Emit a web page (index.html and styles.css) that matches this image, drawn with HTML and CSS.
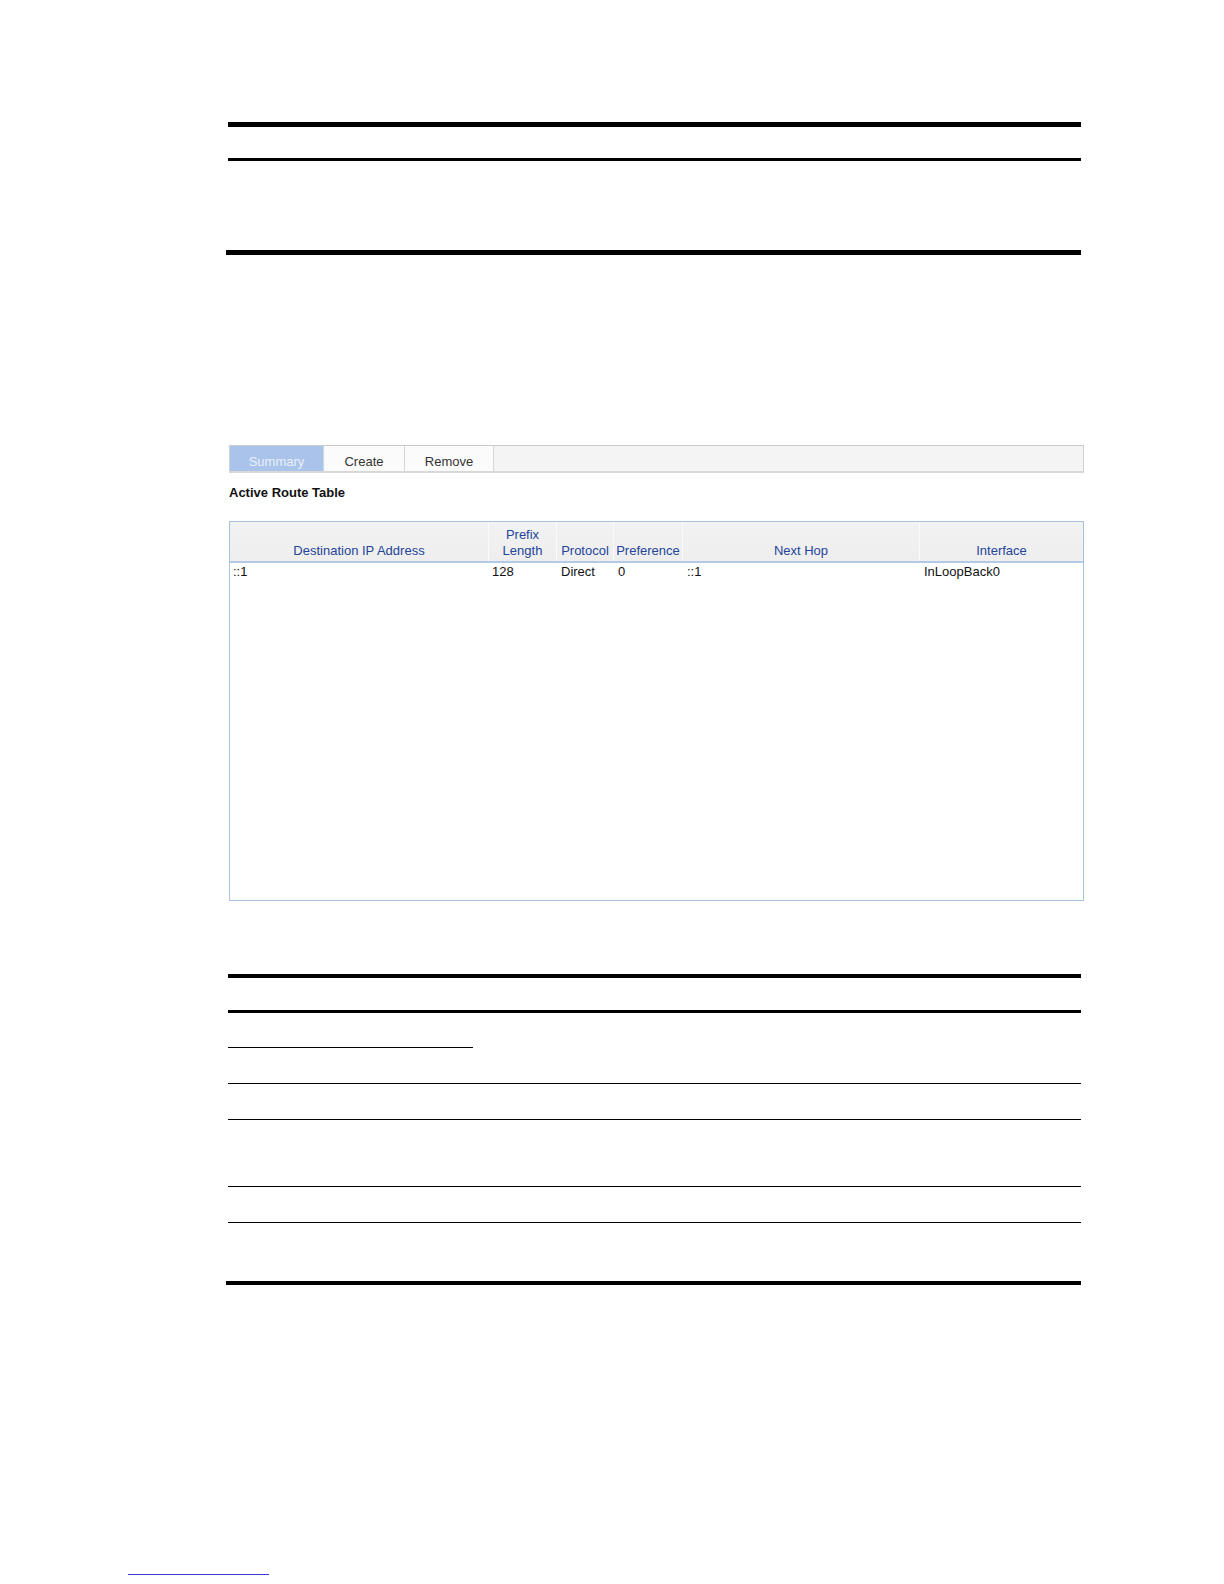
FILE: index.html
```html
<!DOCTYPE html>
<html lang="en">
<head>
<meta charset="utf-8">
<title>Active Route Table</title>
<link rel="stylesheet" href="styles.css">
</head>
<body>
<div class="page">
  <div class="rule-table top-table">
    <div class="rt-head"></div>
    <div class="rt-body-top"></div>
    <div class="rt-end"></div>
  </div>

  <div class="shot">
    <div class="tabs">
      <div class="tab active">Summary</div>
      <div class="tab">Create</div>
      <div class="tab">Remove</div>
      <div class="tab-fill"></div>
    </div>
    <h2 class="title">Active Route Table</h2>
    <div class="grid">
      <div class="grid-head">
        <div class="hc c1">Destination IP Address</div>
        <div class="hc c2">Prefix<br>Length</div>
        <div class="hc c3">Protocol</div>
        <div class="hc c4">Preference</div>
        <div class="hc c5">Next Hop</div>
        <div class="hc c6">Interface</div>
      </div>
      <div class="grid-row">
        <div class="dc c1">::1</div>
        <div class="dc c2">128</div>
        <div class="dc c3">Direct</div>
        <div class="dc c4">0</div>
        <div class="dc c5">::1</div>
        <div class="dc c6">InLoopBack0</div>
      </div>
    </div>
  </div>

  <div class="rule-table bottom-table">
    <div class="rt-head thin"></div>
    <div class="rt-row r1"><div class="sub"></div></div>
    <div class="rt-row r2"></div>
    <div class="rt-row r3"></div>
    <div class="rt-row r4"></div>
    <div class="rt-row r5 last"></div>
    <div class="rt-end thin"></div>
  </div>

  <div class="foot-link"></div>
</div>
</body>
</html>
```
FILE: styles.css
```css
html, body {
  margin: 0;
  padding: 0;
  background: #ffffff;
}
body {
  font-family: "Liberation Sans", Arial, sans-serif;
  font-size: 13px;
  color: #000;
}
.page {
  width: 1224px;
  min-height: 1584px;
}

/* document rule tables */
.rule-table {
  margin-left: 228px;
  width: 853px;
}
.top-table {
  padding-top: 122px;
}
.rt-head {
  border-top: 5px solid #000;
  border-bottom: 3px solid #000;
  height: 31px;
}
.rt-head.thin {
  border-top-width: 4px;
  height: 32px;
}
.rt-body-top {
  height: 89px;
}
.rt-end {
  margin-left: -2px;
  width: 855px;
  height: 5px;
  background: #000;
}
.rt-end.thin {
  height: 4px;
}

.bottom-table {
  margin-top: 73px;
}
.rt-row {
  border-bottom: 1px solid #000;
}
.rt-row.last {
  border-bottom: none;
}
.r1 { height: 70px; }
.r1 .sub {
  width: 245px;
  height: 34px;
  border-bottom: 1px solid #000;
}
.r2 { height: 35px; }
.r3 { height: 66px; }
.r4 { height: 35px; }
.r5 { height: 58px; }

/* UI screenshot */
.shot {
  margin-top: 190px;
  margin-left: 229px;
  width: 855px;
}
.tabs {
  display: flex;
  height: 25px;
  border-top: 1px solid #cacaca;
  border-left: 1px solid #d2d2d2;
  border-right: 1px solid #d2d2d2;
  border-bottom: 2px solid #d8d8d8;
  background: #f4f4f4;
}
.tab {
  display: flex;
  align-items: center;
  justify-content: center;
  padding-top: 6px;
  box-sizing: border-box;
  height: 25px;
  background: #fbfbfb;
  border-right: 1px solid #d6d6d6;
  color: #333;
  font-size: 13px;
}
.tab:nth-child(1) { width: 94px; }
.tab:nth-child(2) { width: 81px; }
.tab:nth-child(3) { width: 89px; }
.tab.active {
  background: #a9c3ea;
  color: #e9eff9;
  border-right: 1px solid #c8d6ec;
}
.tab-fill {
  flex: 1;
}

.title {
  margin: 12px 0 0 0;
  font-size: 13px;
  line-height: 16px;
  font-weight: bold;
  color: #111;
}

.grid {
  margin-top: 20px;
  height: 378px;
  border: 1px solid #a9c2e0;
}
.grid-head {
  display: flex;
  height: 39px;
  border-bottom: 2px solid #b2cae8;
  background: linear-gradient(#f2f2f2, #eeeeee);
}
.hc {
  display: flex;
  align-items: flex-end;
  justify-content: center;
  text-align: center;
  box-sizing: border-box;
  padding-bottom: 2px;
  line-height: 16px;
  color: #24449a;
  border-right: 1px solid #fafafa;
}
.hc.c6 { border-right: none; }
.c1 { width: 259px; }
.c2 { width: 68px; }
.c3 { width: 57px; }
.c4 { width: 69px; }
.c5 { width: 237px; }
.c6 { width: 163px; }

.grid-row {
  display: flex;
  height: 17px;
  padding-top: 1px;
}
.dc {
  box-sizing: border-box;
  padding-left: 3px;
  line-height: 16px;
  color: #111;
}
.dc.c3,
.dc.c4,
.dc.c5,
.dc.c6 { padding-left: 4px; }

.foot-link {
  margin-top: 289px;
  margin-left: 128px;
  width: 141px;
  height: 1px;
  background: #3a3ad8;
}
```
